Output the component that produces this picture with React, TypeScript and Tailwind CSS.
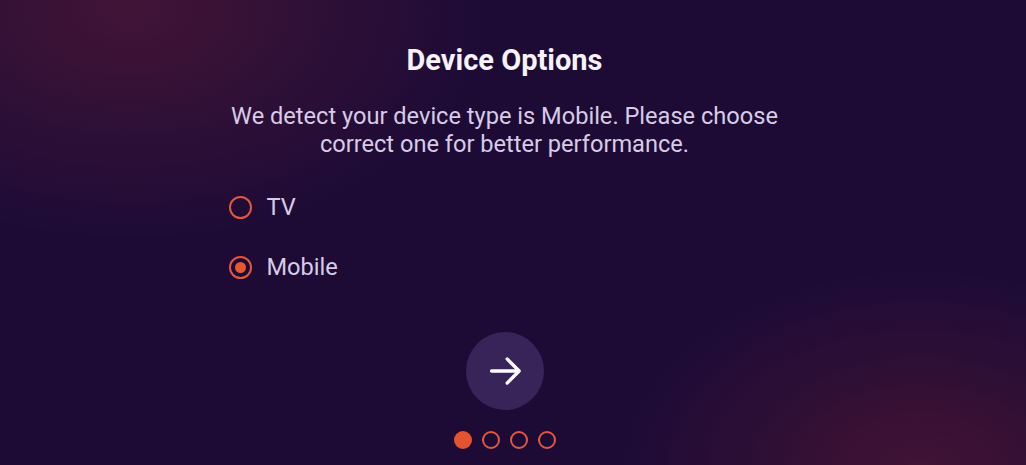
import React from 'react'

const ArrowIcon = ({ className = 'h-8 w-8' }: { className?: string }) => (
  <svg viewBox="0 0 24 24" fill="none" className={className} aria-hidden>
    <path d="M2.5 12h19.5M13.5 3.5l8.5 8.5-8.5 8.5" stroke="currentColor" strokeWidth="2.3" strokeLinecap="round" strokeLinejoin="round" />
  </svg>
)

const Radio = ({ label, checked }: { label: string; checked?: boolean }) => (
  <label className="flex h-[30px] items-center gap-[15px]">
    <span className="flex h-[23px] w-[23px] items-center justify-center rounded-full border-2 border-[#e2573f]">
      {checked && <span className="h-[11px] w-[11px] rounded-full bg-[#e6582f]" />}
    </span>
    <span className="text-[23.6px] leading-[30px] text-[#d8cbe6]">{label}</span>
  </label>
)

export default function App() {
  return (
    <div
      className="relative flex h-[465px] w-full flex-col items-center overflow-hidden bg-[#1d0b36] pr-[17px] font-['Roboto','Noto_Sans',sans-serif]"
      style={{
        backgroundImage:
          'radial-gradient(ellipse 360px 230px at 130px 10px, rgba(72,22,55,0.85), rgba(72,22,55,0) 100%), radial-gradient(ellipse 300px 200px at 920px 470px, rgba(70,20,52,0.9), rgba(70,20,52,0) 100%)',
      }}
    >
      <h1 className="mt-[42px] text-[29px] font-bold leading-[36px] text-[#f7f2fb]">Device Options</h1>

      <p className="mt-[24px] w-[600px] text-center text-[23.6px] leading-[28px] text-[#d8cbe6]">
        We detect your device type is Mobile. Please choose
        <br />
        correct one for better performance.
      </p>

      <div className="mt-[34px] flex w-[560px] flex-col gap-[30px] pl-[4px]">
        <Radio label="TV" />
        <Radio label="Mobile" checked />
      </div>

      <button className="mt-[50px] flex h-[78px] w-[78px] items-center justify-center rounded-full bg-[#39245a] text-white">
        <ArrowIcon className="h-[34px] w-[34px]" />
      </button>

      <div className="mt-[21px] flex gap-[10px]">
        <span className="h-[18px] w-[18px] rounded-full bg-[#e4532f]" />
        <span className="h-[18px] w-[18px] rounded-full border-2 border-[#e2573f]" />
        <span className="h-[18px] w-[18px] rounded-full border-2 border-[#e2573f]" />
        <span className="h-[18px] w-[18px] rounded-full border-2 border-[#e2573f]" />
      </div>
    </div>
  )
}
